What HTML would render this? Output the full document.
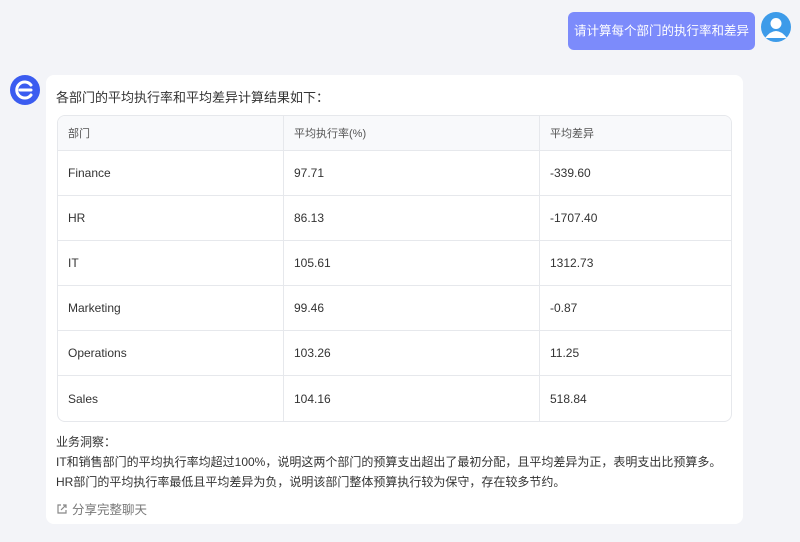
<!DOCTYPE html>
<html><head><meta charset="utf-8"><style>
*{margin:0;padding:0;box-sizing:border-box}
body{width:800px;height:542px;background:#f3f4f8;font-family:"Liberation Sans","Noto Sans CJK SC",sans-serif;color:#333;position:relative;overflow:hidden}
.bubble{position:absolute;left:568px;top:12px;width:187px;height:38px;background:#7c8bfb;border-radius:6px;color:#fff;font-size:12.5px;line-height:38px;text-align:center;white-space:nowrap}
.av{position:absolute;left:761px;top:12px;width:30px;height:30px;border-radius:50%;background:#3d9be9;overflow:hidden}
.logo{position:absolute;left:10px;top:75px;width:30px;height:30px;border-radius:50%;background:#3b5cf0}
.card{position:absolute;left:46px;top:75px;width:697px;height:449px;background:#fff;border-radius:8px}
.t1{position:absolute;left:10px;top:12px;font-size:13px}
table{position:absolute;left:11px;top:40px;width:675px;border-collapse:separate;border-spacing:0;border:1px solid #e6e8ec;border-radius:8px;overflow:hidden;font-size:12px}
td{height:45px;padding-left:10px;border-right:1px solid #e6e8ec;border-bottom:1px solid #e6e8ec}
td:last-child{border-right:none}
tr:last-child td{border-bottom:none}
tr.h td{height:35px;background:#f8f9fb;font-size:11px;color:#555}
.ins{position:absolute;left:10px;top:357px;font-size:12px;line-height:20px;white-space:nowrap}
.share{position:absolute;left:10px;top:424px;font-size:12.5px;color:#777}
</style></head><body>
<div class="bubble">请计算每个部门的执行率和差异</div>
<div class="av"><svg width="30" height="30"><circle cx="15" cy="11.5" r="5.5" fill="#fff"/><path d="M4 26 Q15 12 26 26 Z" fill="#fff"/></svg></div>
<div class="logo"><svg width="30" height="30"><path d="M21 10 A8 8 0 1 0 21 20" stroke="#fff" stroke-width="3" fill="none" stroke-linecap="round"/><path d="M10 15 H21" stroke="#fff" stroke-width="3" stroke-linecap="round"/></svg></div>
<div class="card">
<div class="t1">各部门的平均执行率和平均差异计算结果如下：</div>
<table>
<tr class="h"><td style="width:226px">部门</td><td style="width:256px">平均执行率(%)</td><td>平均差异</td></tr>
<tr><td>Finance</td><td>97.71</td><td>-339.60</td></tr>
<tr><td>HR</td><td>86.13</td><td>-1707.40</td></tr>
<tr><td>IT</td><td>105.61</td><td>1312.73</td></tr>
<tr><td>Marketing</td><td>99.46</td><td>-0.87</td></tr>
<tr><td>Operations</td><td>103.26</td><td>11.25</td></tr>
<tr><td>Sales</td><td>104.16</td><td>518.84</td></tr>
</table>
<div class="ins">业务洞察：<br>IT和销售部门的平均执行率均超过100%，说明这两个部门的预算支出超出了最初分配，且平均差异为正，表明支出比预算多。<br>HR部门的平均执行率最低且平均差异为负，说明该部门整体预算执行较为保守，存在较多节约。</div>
<div class="share"><svg width="12" height="12" style="vertical-align:-1px;margin-right:4px"><path d="M5 2H2V10H10V7M7 2H10V5M10 2L5 7" stroke="#888" stroke-width="1.2" fill="none"/></svg>分享完整聊天</div>
</div>
</body></html>
